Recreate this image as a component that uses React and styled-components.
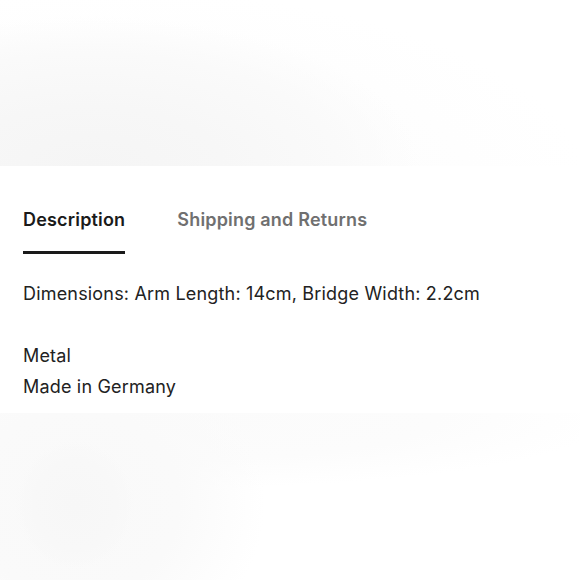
import React, { useState } from "react";
import styled, { createGlobalStyle } from "styled-components";

const GlobalStyle = createGlobalStyle`
    body {
        margin: 0;
        background: #ffffff;
        font-family: Inter, "Noto Sans", "Liberation Sans", sans-serif;
        color: #1a1a1a;
    }
`;

const Page = styled.div`
    width: 580px;
    display: flex;
    flex-direction: column;
`;

const TopImage = styled.div`
    height: 166px;
    background:
        radial-gradient(ellipse 330px 150px at 90px 166px, #f5f5f5 0%, #f7f7f7 40%, #fafafa 75%, rgba(255, 255, 255, 0) 100%),
        radial-gradient(ellipse 470px 200px at 120px 190px, #fbfbfb 0%, rgba(255, 255, 255, 0) 100%),
        #ffffff;
`;

// shadow blob under the product shot, positions relative to this box
const BottomImage = styled.div`
    height: 167px;
    background:
        radial-gradient(ellipse 60px 65px at 75px 92px, #f7f7f7 0%, #f8f8f8 70%, rgba(248, 248, 248, 0) 100%),
        radial-gradient(ellipse 190px 170px at 75px 90px, #f9f9f9 0%, #fafafa 55%, rgba(255, 255, 255, 0) 100%),
        radial-gradient(ellipse 430px 70px at 180px 5px, #fbfbfb 0%, #fcfcfc 60%, rgba(255, 255, 255, 0) 100%),
        #ffffff;
`;

const Section = styled.div`
    padding: 0 23px;
    background: #ffffff;
`;

const Tabs = styled.div`
    display: flex;
    gap: 52px;
`;

const Tab = styled.button`
    appearance: none;
    background: none;
    border: none;
    padding: 42px 0 19px;
    margin: 0;
    font-family: inherit;
    font-size: 18px;
    line-height: 24px;
    font-weight: 600;
    letter-spacing: 0.18px;
    color: ${(p) => (p.$active ? "#1a1a1a" : "#707070")};
    border-bottom: 3px solid ${(p) => (p.$active ? "#1a1a1a" : "transparent")};
    cursor: pointer;
`;

const Content = styled.div`
    padding: 24px 0 11px;
    font-size: 18px;
    line-height: 31px;
    letter-spacing: 0.18px;
    color: #222222;
`;

const Line = styled.p`
    margin: 0;
    min-height: 31px;
`;

const App = () => {
    const [tab, setTab] = useState(0);

    return (
        <Page>
            <GlobalStyle />
            <TopImage />
            <Section>
                <Tabs>
                    <Tab $active={tab === 0} onClick={() => setTab(0)}>
                        Description
                    </Tab>
                    <Tab $active={tab === 1} onClick={() => setTab(1)}>
                        Shipping and Returns
                    </Tab>
                </Tabs>
                <Content>
                    <Line>Dimensions: Arm Length: 14cm, Bridge Width: 2.2cm</Line>
                    <Line />
                    <Line>Metal</Line>
                    <Line>Made in Germany</Line>
                </Content>
            </Section>
            <BottomImage />
        </Page>
    );
};

export default App;
